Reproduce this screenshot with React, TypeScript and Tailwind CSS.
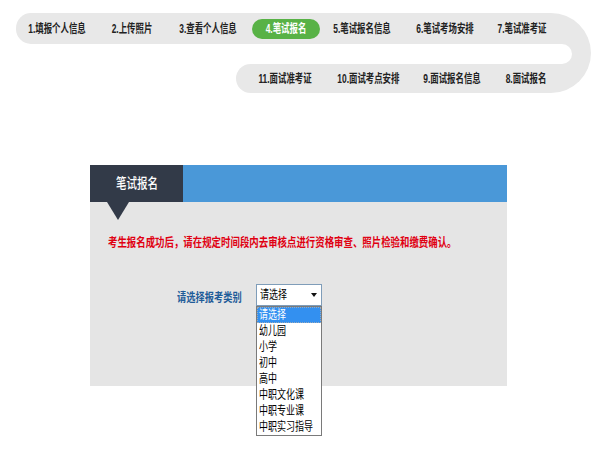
import React from "react";

const font = { fontFamily: '"Liberation Sans", "Noto Sans CJK SC", sans-serif' };

function Tab({ w, label, active }: { w: number; label: string; active?: boolean }) {
  return (
    <div style={{ width: w }} className="flex justify-center items-center shrink-0">
      {active ? (
        <div className="w-[68px] h-[20px] rounded-full bg-[#58b246] flex items-center justify-center">
          <span className="inline-block whitespace-nowrap scale-x-[0.7] text-[12px] font-bold text-white leading-none">{label}</span>
        </div>
      ) : (
        <span className="inline-block whitespace-nowrap scale-x-[0.7] text-[12px] font-bold text-[#222] leading-none">{label}</span>
      )}
    </div>
  );
}

const options = ["请选择", "幼儿园", "小学", "初中", "高中", "中职文化课", "中职专业课", "中职实习指导"];

export default function App() {
  return (
    <div className="w-[600px] h-[461px] bg-white overflow-hidden" style={font}>
      {/* step navigation */}
      <div className="mt-[13px] ml-[16px] w-[575px] rounded-r-[40px] overflow-hidden flex flex-col">
        <div className="h-[31px] bg-[#e8e8e8] rounded-l-[15px] flex items-center">
          <Tab w={83} label="1.填报个人信息" />
          <Tab w={66} label="2.上传照片" />
          <Tab w={87} label="3.查看个人信息" />
          <Tab w={68} label="4.笔试报名" active />
          <Tab w={84} label="5.笔试报名信息" />
          <Tab w={81} label="6.笔试考场安排" />
          <Tab w={74} label="7.笔试准考证" />
        </div>
        <div className="h-[20px] bg-[#e8e8e8] flex">
          <div className="w-[556px] h-full bg-white rounded-r-[10px]" />
        </div>
        <div className="h-[29px] flex">
          <div className="w-[220px] shrink-0" />
          <div className="flex-1 bg-[#e8e8e8] rounded-l-[15px] flex items-center">
            <Tab w={99} label="11.面试准考证" />
            <Tab w={66} label="10.面试考点安排" />
            <Tab w={102} label="9.面试报名信息" />
            <Tab w={46} label="8.面试报名" />
          </div>
        </div>
      </div>

      {/* panel */}
      <div className="relative mt-[72px] ml-[90px] w-[417px]">
        <div className="h-[37px] flex">
          <div className="w-[93px] bg-[#323a48] flex items-center justify-center">
            <span className="inline-block whitespace-nowrap scale-x-[0.75] text-[14px] font-medium text-white">笔试报名</span>
          </div>
          <div className="flex-1 bg-[#4a98d8]" />
        </div>
        <div className="relative h-[184px] bg-[#e5e5e5]">
          <div className="absolute left-[17px] top-0 w-0 h-0 border-l-[11px] border-r-[11px] border-t-[18px] border-l-transparent border-r-transparent border-t-[#323a48]" />
          <div className="pt-[32px] pl-[18px] h-[48px] leading-[16px]">
            <span className="inline-block whitespace-nowrap origin-left scale-x-[0.785] text-[12px] font-bold text-[#e00012]">
              考生报名成功后，请在规定时间段内去审核点进行资格审查、照片检验和缴费确认。
            </span>
          </div>
          <div className="mt-[34px] pl-[87px] flex items-start">
            <div className="w-[79px] shrink-0 pt-[5px] leading-[16px]">
              <span className="inline-block whitespace-nowrap origin-left scale-x-[0.77] text-[12px] font-bold text-[#1f5c99]">请选择报考类别</span>
            </div>
            <div className="w-[66px] h-[22px] border border-[#7f9db9] bg-white flex items-center justify-between pl-[3px] pr-[4px]">
              <span className="inline-block whitespace-nowrap origin-left scale-x-[0.75] text-[12px] text-black leading-none">请选择</span>
              <svg width="6" height="4" viewBox="0 0 6 4"><path d="M0 0h6L3 4z" fill="#111" /></svg>
            </div>
          </div>
        </div>
        {/* open dropdown list */}
        <div className="absolute left-[166px] top-[141px] w-[66px] border border-[#7a7a7a] bg-white flex flex-col">
          {options.map((o, i) => (
            <div
              key={o}
              className={
                i === 0
                  ? "h-[16px] bg-[#3390f0] text-white border border-dotted border-[#9ab] flex items-center pl-[1px]"
                  : "h-[16px] text-black flex items-center pl-[2px]"
              }
            >
              <span className="inline-block whitespace-nowrap origin-left scale-x-[0.75] text-[12px] leading-none">{o}</span>
            </div>
          ))}
        </div>
      </div>
    </div>
  );
}
